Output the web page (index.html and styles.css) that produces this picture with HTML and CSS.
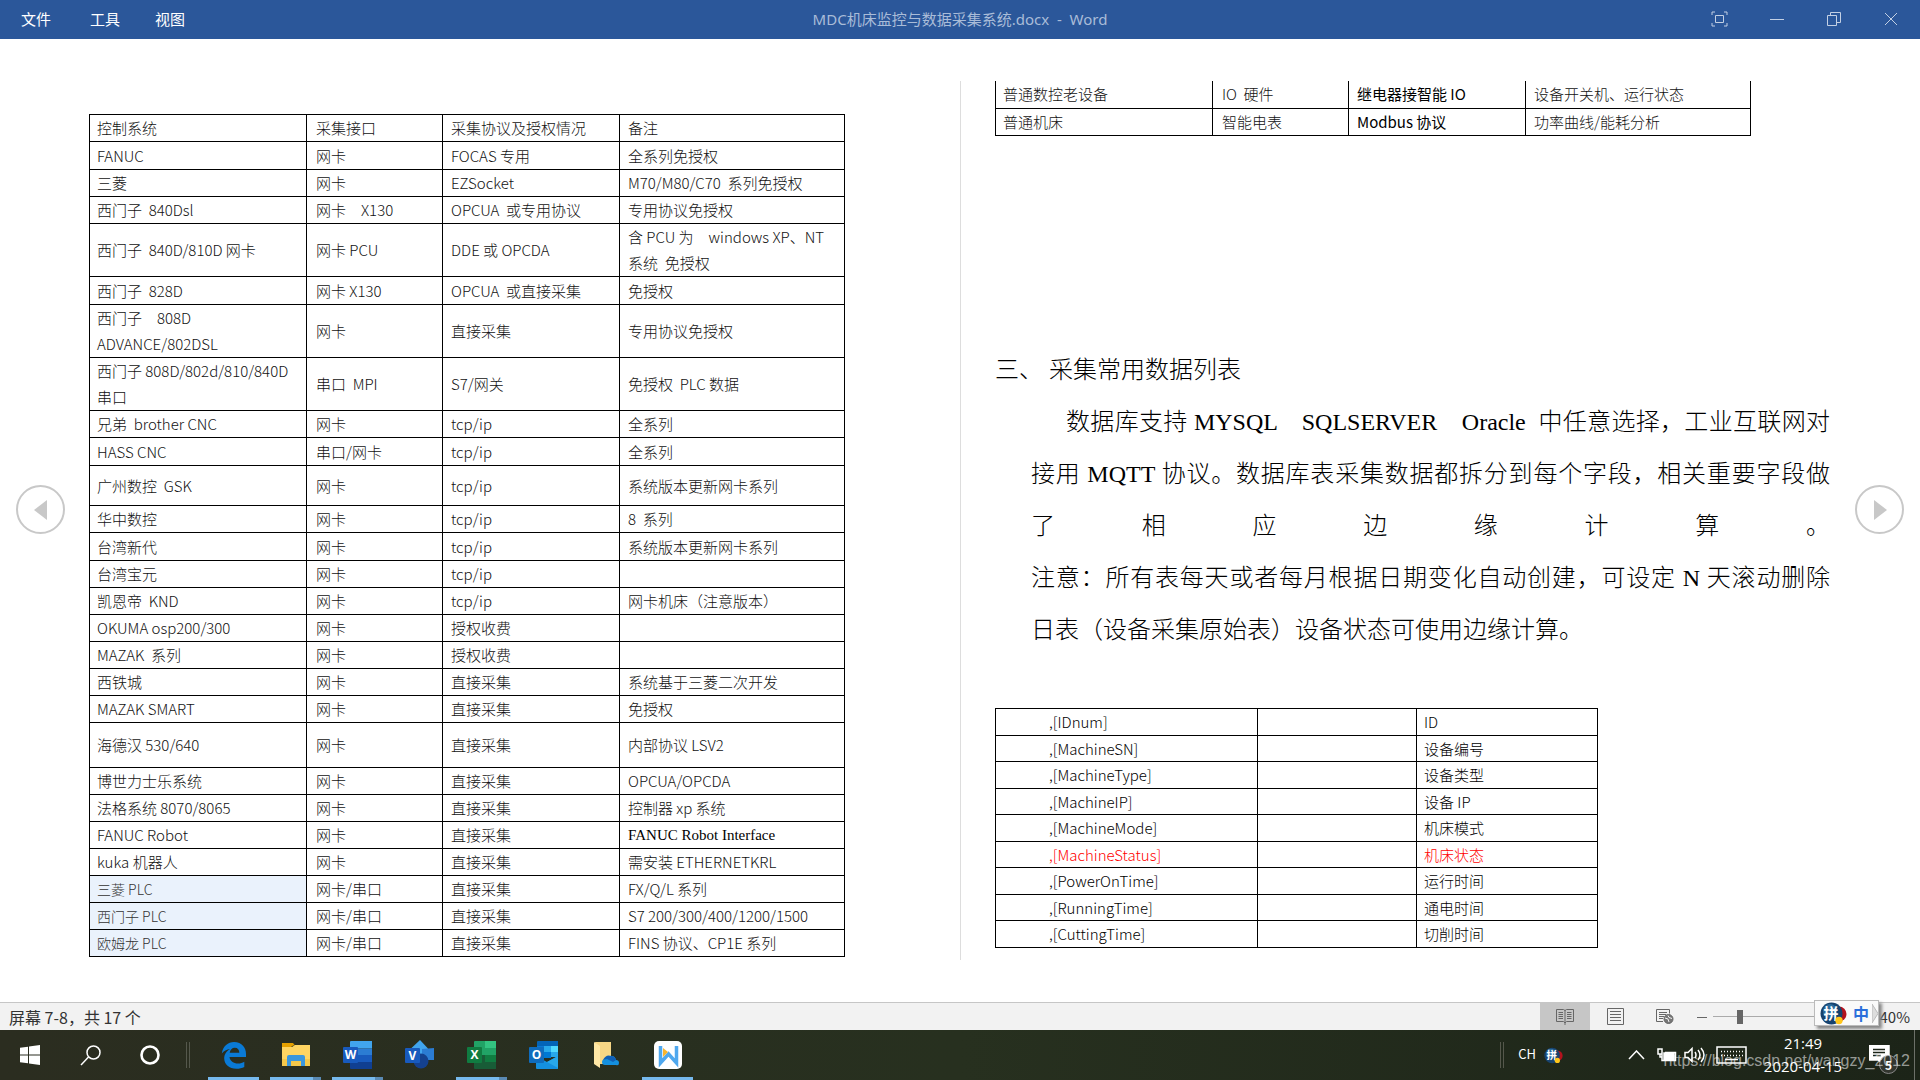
FILE: index.html
```html
<!DOCTYPE html>
<html lang="zh-CN">
<head>
  <meta charset="UTF-8">
  <meta name="viewport" content="width=device-width, initial-scale=1.0">
  <title>MDC机床监控与数据采集系统.docx - Word</title>
  <link rel="stylesheet" href="styles.css">
</head>
<body>

<header class="titlebar">
  <nav class="menu">
    <button>文件</button>
    <button>工具</button>
    <button>视图</button>
  </nav>
  <div class="doc-title">MDC机床监控与数据采集系统.docx&nbsp; -&nbsp; Word</div>
  <div class="window-buttons">
    <button aria-label="全屏"><svg width="17" height="16" viewBox="0 0 17 16"><path d="M1 4V1h3M13 1h3v3M16 12v3h-3M4 15H1v-3M4.500 4.500h8v7h-8z"/></svg></button>
    <button aria-label="最小化"><svg width="14" height="16" viewBox="0 0 14 16"><path d="M0 8.500h14"/></svg></button>
    <button aria-label="还原"><svg width="14" height="14" viewBox="0 0 14 14"><path d="M.5 3.500h9v10h-9zM3.500 3.500v-3h10v10h-4"/></svg></button>
    <button aria-label="关闭"><svg width="14" height="14" viewBox="0 0 14 14"><path d="M1 1l12 12M13 1L1 13"/></svg></button>
  </div>
</header>

<main class="reader">
  <button class="turn turn-prev" aria-label="上一页"><svg width="14" height="20" viewBox="0 0 14 20"><path d="M13 0v20L0 10z"/></svg></button>
  <button class="turn turn-next" aria-label="下一页"><svg width="14" height="20" viewBox="0 0 14 20"><path d="M1 0v20l13-10z"/></svg></button>

  <section class="page page-left">
    <table class="grid systems">
      <colgroup><col class="c1"><col class="c2"><col class="c3"><col class="c4"></colgroup>
      <tr><td>控制系统</td><td>采集接口</td><td>采集协议及授权情况</td><td>备注</td></tr>
      <tr class="loose"><td>FANUC</td><td>网卡</td><td>FOCAS 专用</td><td>全系列免授权</td></tr>
      <tr><td>三菱</td><td>网卡</td><td>EZSocket</td><td>M70/M80/C70  系列免授权</td></tr>
      <tr><td>西门子  840Dsl</td><td>网卡　X130</td><td>OPCUA  或专用协议</td><td>专用协议免授权</td></tr>
      <tr class="double"><td>西门子  840D/810D 网卡</td><td>网卡 PCU</td><td>DDE 或 OPCDA</td><td>含 PCU 为　windows XP、NT<br>系统  免授权</td></tr>
      <tr class="loose"><td>西门子  828D</td><td>网卡 X130</td><td>OPCUA  或直接采集</td><td>免授权</td></tr>
      <tr class="double"><td>西门子　808D<br>ADVANCE/802DSL</td><td>网卡</td><td>直接采集</td><td>专用协议免授权</td></tr>
      <tr class="double"><td>西门子 808D/802d/810/840D<br>串口</td><td>串口  MPI</td><td>S7/网关</td><td>免授权  PLC 数据</td></tr>
      <tr><td>兄弟  brother CNC</td><td>网卡</td><td>tcp/ip</td><td>全系列</td></tr>
      <tr class="loose"><td>HASS CNC</td><td>串口/网卡</td><td>tcp/ip</td><td>全系列</td></tr>
      <tr class="tall"><td>广州数控  GSK</td><td>网卡</td><td>tcp/ip</td><td>系统版本更新网卡系列</td></tr>
      <tr><td>华中数控</td><td>网卡</td><td>tcp/ip</td><td>8  系列</td></tr>
      <tr class="loose"><td>台湾新代</td><td>网卡</td><td>tcp/ip</td><td>系统版本更新网卡系列</td></tr>
      <tr><td>台湾宝元</td><td>网卡</td><td>tcp/ip</td><td></td></tr>
      <tr><td>凯恩帝  KND</td><td>网卡</td><td>tcp/ip</td><td>网卡机床（注意版本）</td></tr>
      <tr><td>OKUMA osp200/300</td><td>网卡</td><td>授权收费</td><td></td></tr>
      <tr><td>MAZAK  系列</td><td>网卡</td><td>授权收费</td><td></td></tr>
      <tr><td>西铁城</td><td>网卡</td><td>直接采集</td><td>系统基于三菱二次开发</td></tr>
      <tr><td>MAZAK SMART</td><td>网卡</td><td>直接采集</td><td>免授权</td></tr>
      <tr class="taller"><td>海德汉 530/640</td><td>网卡</td><td>直接采集</td><td>内部协议 LSV2</td></tr>
      <tr><td>博世力士乐系统</td><td>网卡</td><td>直接采集</td><td>OPCUA/OPCDA</td></tr>
      <tr><td>法格系统 8070/8065</td><td>网卡</td><td>直接采集</td><td>控制器 xp 系统</td></tr>
      <tr><td>FANUC Robot</td><td>网卡</td><td>直接采集</td><td class="serif">FANUC Robot Interface</td></tr>
      <tr><td>kuka 机器人</td><td>网卡</td><td>直接采集</td><td>需安装 ETHERNETKRL</td></tr>
      <tr><td class="plc">三菱 PLC</td><td>网卡/串口</td><td>直接采集</td><td>FX/Q/L 系列</td></tr>
      <tr><td class="plc">西门子 PLC</td><td>网卡/串口</td><td>直接采集</td><td>S7 200/300/400/1200/1500</td></tr>
      <tr><td class="plc">欧姆龙 PLC</td><td>网卡/串口</td><td>直接采集</td><td>FINS 协议、CP1E 系列</td></tr>
    </table>
  </section>

  <section class="page page-right">
    <table class="grid systems continued">
      <colgroup><col class="c1"><col class="c2"><col class="c3"><col class="c4"></colgroup>
      <tr><td>普通数控老设备</td><td>IO  硬件</td><td class="dark">继电器接智能 IO</td><td>设备开关机、运行状态</td></tr>
      <tr><td>普通机床</td><td>智能电表</td><td class="dark">Modbus 协议</td><td>功率曲线/能耗分析</td></tr>
    </table>

    <div class="article">
      <h2>三、 采集常用数据列表</h2>
      <p>
        <span class="line first">数据库支持 MYSQL　SQLSERVER　Oracle&nbsp; 中任意选择，工业互联网对</span>
        <span class="line">接用 MQTT 协议。数据库表采集数据都拆分到每个字段，相关重要字段做</span>
        <span class="line">了相应边缘计算。</span>
        <span class="line">注意：所有表每天或者每月根据日期变化自动创建，可设定 N 天滚动删除</span>
        <span class="line last">日表（设备采集原始表）设备状态可使用边缘计算。</span>
      </p>
    </div>

    <table class="grid fields">
      <colgroup><col class="f1"><col class="f2"><col class="f3"></colgroup>
      <tr><td>,[IDnum]</td><td></td><td>ID</td></tr>
      <tr><td>,[MachineSN]</td><td></td><td>设备编号</td></tr>
      <tr><td>,[MachineType]</td><td></td><td>设备类型</td></tr>
      <tr><td>,[MachineIP]</td><td></td><td>设备 IP</td></tr>
      <tr><td>,[MachineMode]</td><td></td><td>机床模式</td></tr>
      <tr class="status"><td>,[MachineStatus]</td><td></td><td>机床状态</td></tr>
      <tr><td>,[PowerOnTime]</td><td></td><td>运行时间</td></tr>
      <tr><td>,[RunningTime]</td><td></td><td>通电时间</td></tr>
      <tr><td>,[CuttingTime]</td><td></td><td>切削时间</td></tr>
    </table>
  </section>
</main>

<div class="statusbar">
  <span class="page-count">屏幕 7-8，共 17 个</span>
  <div class="view-buttons">
    <button class="active" aria-label="阅读视图"><svg width="18" height="17" viewBox="0 0 18 17"><path d="M9 2.500L7.500 1.500H.5v12h7L9 15l1.500-1.500h7v-12h-7zM9 2v15M2.500 4.500h4.500M2.500 6.500h4.500M2.500 8.500h4.500M2.500 10.500h4.500M11 4.500h4.500M11 6.500h4.500M11 8.500h4.500M11 10.500h4.500"/></svg></button>
    <button aria-label="页面视图"><svg width="17" height="17" viewBox="0 0 17 17"><path d="M.5.500h16v16H.5zM3 3.500h11M3 6.500h11M3 9.500h11M3 12.500h11"/></svg></button>
    <button aria-label="Web 版式"><svg width="18" height="17" viewBox="0 0 18 17"><path d="M7 13.500H.5V1.500h13v4M3 4.500h8M3 6.500h7M3 8.500h5M3 10.500h4"/><circle cx="12.500" cy="11" r="4.500" fill="#777"/><path d="M9 10l3 1 1 3M12 7.500l1 2 3 1" stroke="#f2f2f2"/></svg></button>
  </div>
  <div class="zoom">
    <button aria-label="缩小"><svg width="10" height="10" viewBox="0 0 10 10"><path d="M0 5.500h10"/></svg></button>
    <input type="range" min="0" max="100" value="22" aria-label="显示比例">
    <span class="percent">40%</span>
  </div>
  <div class="ime-bar">
    <svg width="27" height="23" viewBox="0 0 27 23"><circle cx="19" cy="12" r="7.500" fill="#b3121d"/><circle cx="11.500" cy="11.500" r="11" fill="#17436f"/><circle cx="10" cy="9" r="7" fill="#2c6b9b"/><text x="11" y="17" class="ball-text">拼</text><circle cx="19" cy="18.500" r="3.700" fill="#ffc61a"/></svg>
    <span class="ime-mode">中</span>
    <svg class="ime-more" width="7" height="19" viewBox="0 0 7 19"><path d="M0 0l6 9.500L0 19z" fill="#ddd" stroke="#bbb"/></svg>
  </div>
</div>

<footer class="taskbar">
  <button class="sys" aria-label="开始"><svg width="20" height="20" viewBox="0 0 20 20"><path fill="#fff" d="M0 2.800L8 1.700v7.800H0zM9 1.500L20 0v9.500H9zM0 10.500h8v7.800l-8-1.100zM9 10.500h11V20L9 18.500z"/></svg></button>
  <button class="sys" aria-label="搜索"><svg width="21" height="21" viewBox="0 0 21 21"><path d="M1 20l7.500-8" /><circle cx="13.500" cy="7.500" r="6.500"/></svg></button>
  <button class="sys" aria-label="Cortana"><svg width="20" height="20" viewBox="0 0 20 20"><circle cx="10" cy="10" r="8.500" stroke-width="2.600"/></svg></button>
  <span class="grip"></span>

  <div class="apps">
    <button class="app open" aria-label="Edge"><svg width="26" height="28" viewBox="0 0 26 28"><path fill="#0a7ad6" d="M.8 12.500C2 5 7 1 13 1c8 0 12 6 12 12v3H8.500c.5 4 4 6.500 8.500 6.500 2.500 0 4.500-.7 6.300-1.800v5.200c-2 1.200-5 1.800-7.800 1.800C8 27.700 3.200 23 3.200 17.500c0-4 2.300-7.500 6-9.500-3.500.5-6.500 2-8.400 4.500zM8.700 11.700h9.600c0-3-1.500-5-4.500-5-2.800 0-4.700 2-5.100 5z"/></svg></button>
    <button class="app open many" aria-label="文件资源管理器"><svg width="28" height="24" viewBox="0 0 28 24"><path fill="#e6a100" d="M0 0h11l2 2.500h-2L9 4H0z"/><path fill="#ffd562" d="M0 4h10l3-2h15v21H0z"/><path fill="#f5c84a" d="M0 16h28v7H0z"/><path fill="#3b97dd" d="M5 23V14q0-2 2-2h14q2 0 2 2v9h-4v-5H9v5z"/></svg></button>
    <button class="app open many" aria-label="Word"><svg width="30" height="28" viewBox="0 0 30 28"><path fill="#41a5ee" d="M7 1q0-1 1-1h21v7.500H7z"/><path fill="#2b7cd3" d="M7 7.500h22V14H7z"/><path fill="#185abd" d="M7 14h22v7H7z"/><path fill="#103f91" d="M7 21h22v7H8q-1 0-1-1z"/><rect y="6" width="15" height="16" rx="1" fill="#185abd"/><text x="7.500" y="18">W</text></svg></button>
    <button class="app" aria-label="Visio"><svg width="30" height="30" viewBox="0 0 30 30"><path fill="#41a5ee" d="M15 0l8 8.500-8 8-9-8z"/><path fill="#2b7cd3" d="M17 9l12-1v12H17z"/><circle cx="16" cy="21" r="7.500" fill="#14418f"/><rect y="8" width="15" height="15" rx="1" fill="#185abd"/><text x="7.500" y="20">V</text></svg></button>
    <button class="app open many" aria-label="Excel"><svg width="30" height="28" viewBox="0 0 30 28"><path fill="#21a366" d="M7 1q0-1 1-1h10v14H7z"/><path fill="#33c481" d="M18 0h11v7H18z"/><path fill="#21a366" d="M18 7h11v7H18z"/><path fill="#107c41" d="M7 14h22v7H7z"/><path fill="#185c37" d="M7 14h11v7h11v7H8q-1 0-1-1z"/><rect y="6" width="15" height="16" rx="1" fill="#107c41"/><text x="7.500" y="18">X</text></svg></button>
    <button class="app" aria-label="Outlook"><svg width="30" height="28" viewBox="0 0 30 28"><path fill="#0364b8" d="M8 1q0-1 1-1h20v15H8z"/><path fill="#0a78d4" d="M8 5h7v11H8z"/><path fill="#28a8ea" d="M15 5h7v6h-7z"/><path fill="#50d9ff" d="M22 5h7v6h-7z"/><path fill="#0078d4" d="M15 11h7v6h-7z"/><path fill="#28a8ea" d="M22 11h7v5h-7z"/><path fill="#1490df" d="M7 15l11 6 11-6v13H8q-1 0-1-1z"/><path fill="#28a8ea" d="M18 21l11-6v12z"/><rect y="6" width="15" height="16" rx="1" fill="#0f6cbd"/><text x="7.500" y="18">O</text></svg></button>
    <button class="app" aria-label="OneDrive 文件夹"><svg width="26" height="28" viewBox="0 0 26 28"><path fill="#f7d785" d="M2 1h16v22H6z"/><path fill="#ffe8a6" d="M1 1l6 4v22l-6-4z"/><path fill="#1490df" d="M12 24q-3 0-3-3t4-3q2-4 6-3 3 0 4 4 3 0 3 3t-3 2z"/><path fill="#0f5fb5" d="M10 19q3-6 8-4 4 0 5 4l-3 2-6-3z"/></svg></button>
    <button class="app open" aria-label="WPS"><svg width="28" height="28" viewBox="0 0 28 28"><rect width="28" height="28" rx="5" fill="#fff"/><path d="M6.500 5v17l8-9 8 9V5" fill="none" stroke="#4fa8ee" stroke-width="3.500"/><path fill="#f9b52c" d="M9 7l5 4-5 5z"/></svg></button>
  </div>

  <div class="tray">
    <span class="grip"></span>
    <span class="lang">CH</span>
    <svg class="tray-ime" width="19" height="17" viewBox="0 0 27 23"><circle cx="19" cy="12" r="7.500" fill="#b3121d"/><circle cx="11.500" cy="11.500" r="11" fill="#17436f"/><circle cx="10" cy="9" r="7" fill="#2c6b9b"/><text x="11" y="17" class="ball-text">拼</text><circle cx="19" cy="18.500" r="3.700" fill="#ffc61a"/></svg>
    <svg class="tray-up" width="17" height="10" viewBox="0 0 17 10"><path d="M1 9l7.500-8L16 9"/></svg>
    <svg class="battery" width="20" height="14" viewBox="0 0 20 14"><path d="M5 6v6.500h13.500v-8H8M1 1v5h4V1zM3 6v3h2"/><path fill="#fff" d="M7 5h10v7H7z"/></svg>
    <svg width="22" height="18" viewBox="0 0 22 18"><path d="M1 6.500h3l4-4v13l-4-4H1zM11 6q2 3 0 6M14 4q4 5 0 10M17 2q6 7 0 14"/></svg>
    <svg width="31" height="18" viewBox="0 0 31 18"><path d="M1 1h29v16H1z"/><path d="M5 5.500h22M5 9.500h22" stroke-dasharray="1 2"/><path d="M9 13.500h13"/></svg>
    <div class="clock"><span>21:49</span><span>2020-04-15</span></div>
    <button class="notice" aria-label="通知"><svg width="21" height="20" viewBox="0 0 21 20"><path fill="#fff" d="M0 0h20v15h-6v4l-5-4H0z"/><path d="M4 4.500h12M4 7.500h12M4 10.500h8" stroke="#1c2418"/></svg><span class="badge">5</span></button>
    <span class="desktop-edge"></span>
  </div>
  <div class="watermark">https://blog.csdn.net/wangzy_2012</div>
</footer>

</body>
</html>
```

FILE: styles.css
```css
* {
  box-sizing: border-box;
}

body {
  margin: 0;
  min-height: 100vh;
  display: flex;
  flex-direction: column;
  background: #fff;
  font-family: "Noto Sans CJK SC", sans-serif;
}

button {
  border: 0;
  padding: 0;
  background: none;
  color: inherit;
  font: inherit;
}

svg {
  display: block;
  flex: none;
}

/* title bar */
.titlebar {
  display: grid;
  grid-template-columns: 1fr auto 1fr;
  align-items: center;
  height: 39px;
  padding-bottom: 2px;
  background: #2b579a;
  color: #fff;
  font-size: 15px;
}

.menu {
  display: flex;
  gap: 35px;
  padding-left: 21px;
}

.menu button:first-child {
  margin-right: 4px;
}

.doc-title {
  color: #a9bcd8;
  font-family: "Noto Sans", "Noto Sans CJK SC", sans-serif;
}

.window-buttons {
  display: flex;
  justify-content: flex-end;
  padding-right: 1px;
}

.window-buttons button {
  width: 57px;
  display: flex;
  justify-content: center;
  align-items: center;
}

.window-buttons svg {
  fill: none;
  stroke: #c3d0e4;
}

/* reading view */
.reader {
  position: relative;
  flex: 1;
  display: grid;
  grid-template-columns: 1fr 1fr;
  padding: 42px 0;
}

.page-left {
  padding: 33px 115px 0 89px;
}

.page-right {
  padding: 0 90px 0 34px;
  border-left: 1px solid #ddd;
}

.turn {
  position: absolute;
  top: 446px;
  width: 49px;
  height: 49px;
  border: 2px solid #c8c8c8;
  border-radius: 50%;
  display: flex;
  justify-content: center;
  align-items: center;
}

.turn svg {
  fill: #c8c8c8;
}

.turn-prev {
  left: 16px;
}

.turn-next {
  right: 16px;
}

.grid {
  border-collapse: collapse;
  table-layout: fixed;
}

.grid td {
  border: 1px solid #000;
  padding: 0 0 0 7px;
  white-space: pre;
  font-size: 15px;
  line-height: 26px;
  font-weight: 300;
  color: #111;
}

.grid tr {
  height: 27px;
}

.grid .loose {
  height: 28px;
}

.grid .double {
  height: 53px;
}

.grid .tall {
  height: 40px;
}

.grid .taller {
  height: 45px;
}

.grid .dark {
  color: #000;
  font-weight: 400;
}

.grid .serif {
  color: #000;
  font-family: "Liberation Serif", serif;
  font-weight: 400;
}

.grid .plc {
  background: #eaf2fc;
  color: #333;
  font-size: 14px;
}

.systems {
  width: 756px;
}

.systems td:nth-child(2) {
  padding-left: 9px;
}

.systems td:nth-child(n + 3) {
  padding-left: 8px;
}

.c1 {
  width: 217px;
}

.c2 {
  width: 136px;
}

.c3 {
  width: 177px;
}

.continued tr:first-child td {
  border-top: 0;
}

/* body text */
.article {
  padding-top: 208px;
  font-family: "Liberation Serif", "Noto Sans CJK SC", serif;
  font-size: 24px;
  font-weight: 300;
  line-height: 52px;
  color: #000;
}

.article h2 {
  margin: 0;
  font-size: 24px;
  font-weight: 300;
}

.article p {
  margin: 0 0 0 36px;
}

.line {
  display: block;
  white-space: nowrap;
  text-align: justify;
  text-align-last: justify;
}

.line.first {
  padding-left: 35px;
}

.line.last {
  text-align-last: left;
}

.fields {
  width: 603px;
  margin-top: 52px;
}

.grid.fields tr:nth-child(even) {
  height: 26px;
}

.grid.fields td {
  line-height: 25px;
  color: #000;
}

.grid.fields td:first-child {
  padding-left: 53px;
}

.grid.fields .status td {
  color: #f00;
}

.f1 {
  width: 262px;
}

.f2 {
  width: 159px;
}

/* word status bar */
.statusbar {
  position: relative;
  display: flex;
  align-items: center;
  height: 28px;
  border-top: 1px solid #c6c6c6;
  background: #f2f2f2;
  color: #333;
  font-size: 15px;
}

.page-count {
  flex: 1;
  padding-left: 9px;
  font-size: 16px;
  line-height: 24px;
}

.view-buttons {
  display: flex;
  height: 100%;
}

.view-buttons button {
  width: 50px;
  display: flex;
  justify-content: center;
  align-items: center;
}

.view-buttons .active {
  background: #c6c6c6;
}

.view-buttons svg,
.zoom svg {
  fill: none;
  stroke: #666;
}

.zoom {
  display: flex;
  align-items: center;
  width: 230px;
  padding: 0 10px 0 7px;
}

.zoom input {
  appearance: none;
  width: 116px;
  height: 16px;
  margin: 0 0 0 6px;
  background: linear-gradient(#aaa, #aaa) center / 100% 1px no-repeat;
}

.zoom input::-webkit-slider-thumb {
  appearance: none;
  width: 6px;
  height: 14px;
  background: #666;
}

.percent {
  margin-left: auto;
}

.ime-bar {
  position: absolute;
  right: 41px;
  top: -3px;
  display: flex;
  align-items: center;
  gap: 6px;
  width: 65px;
  height: 26px;
  padding-left: 5px;
  border: 1px solid #bbb;
  background: #fafafa;
  box-shadow: 3px 3px 3px #888;
}

.ime-mode {
  color: #2a6fdb;
  font-size: 16px;
  font-weight: 700;
  line-height: 24px;
}

.ime-more {
  margin-left: -3px;
}

.ball-text {
  fill: #fff;
  font-size: 15px;
  font-weight: 700;
  text-anchor: middle;
}

/* windows taskbar */
.taskbar {
  position: relative;
  display: flex;
  align-items: center;
  height: 50px;
  background: linear-gradient(90deg, #2b2d20, #27301f 50%, #1c2418);
  color: #fff;
}

.sys {
  width: 60px;
  height: 50px;
  display: flex;
  justify-content: center;
  align-items: center;
}

.sys svg,
.tray svg {
  fill: none;
  stroke: #fff;
  stroke-width: 1.5;
}

.sys:first-child svg {
  stroke: none;
}

.grip {
  width: 4px;
  height: 26px;
  margin-left: 6px;
  border: solid #55584c;
  border-width: 0 1px;
}

.apps {
  flex: 1;
  display: flex;
  gap: 11px;
  margin-left: 18px;
}

.app {
  width: 51px;
  height: 50px;
  display: flex;
  justify-content: center;
  align-items: center;
  border-bottom: 3px solid transparent;
  padding-top: 2px;
}

.app text {
  fill: #fff;
  font: 700 12px "Open Sans", sans-serif;
  text-anchor: middle;
}

.app.open {
  border-bottom-color: #76b9ed;
}

.app.many {
  border-image: linear-gradient(90deg, #76b9ed 80%, #5a8ab3 80%) 3;
  border-width: 0 0 3px;
}

.tray {
  display: flex;
  align-items: center;
  gap: 10px;
  height: 50px;
}

.tray .tray-ime {
  stroke: none;
  margin-left: -2px;
}

.tray .tray-up {
  margin: 0 2px 0 55px;
}

.tray .battery {
  margin-right: -3px;
}

.tray .grip {
  margin-right: 4px;
}

.lang {
  font-size: 13px;
  line-height: 18px;
  padding-bottom: 2px;
}

.clock {
  width: 92px;
  display: flex;
  flex-direction: column;
  text-align: center;
  font-family: "Open Sans", sans-serif;
  font-size: 15px;
  line-height: 23px;
}

.notice {
  position: relative;
  margin-left: 10px;
}

.badge {
  position: absolute;
  left: 10px;
  top: 10px;
  width: 19px;
  height: 19px;
  border: 1px solid #888;
  border-radius: 50%;
  background: #33362f;
  font-size: 12px;
  font-weight: 700;
  line-height: 17px;
}

.desktop-edge {
  width: 6px;
  height: 50px;
  margin-left: 14px;
  border-left: 1px solid #6c7068;
}

.watermark {
  position: absolute;
  right: 10px;
  top: 20px;
  color: rgba(255, 255, 255, 0.55);
  font-family: "Liberation Sans", sans-serif;
  font-size: 16px;
  line-height: 22px;
}
```
